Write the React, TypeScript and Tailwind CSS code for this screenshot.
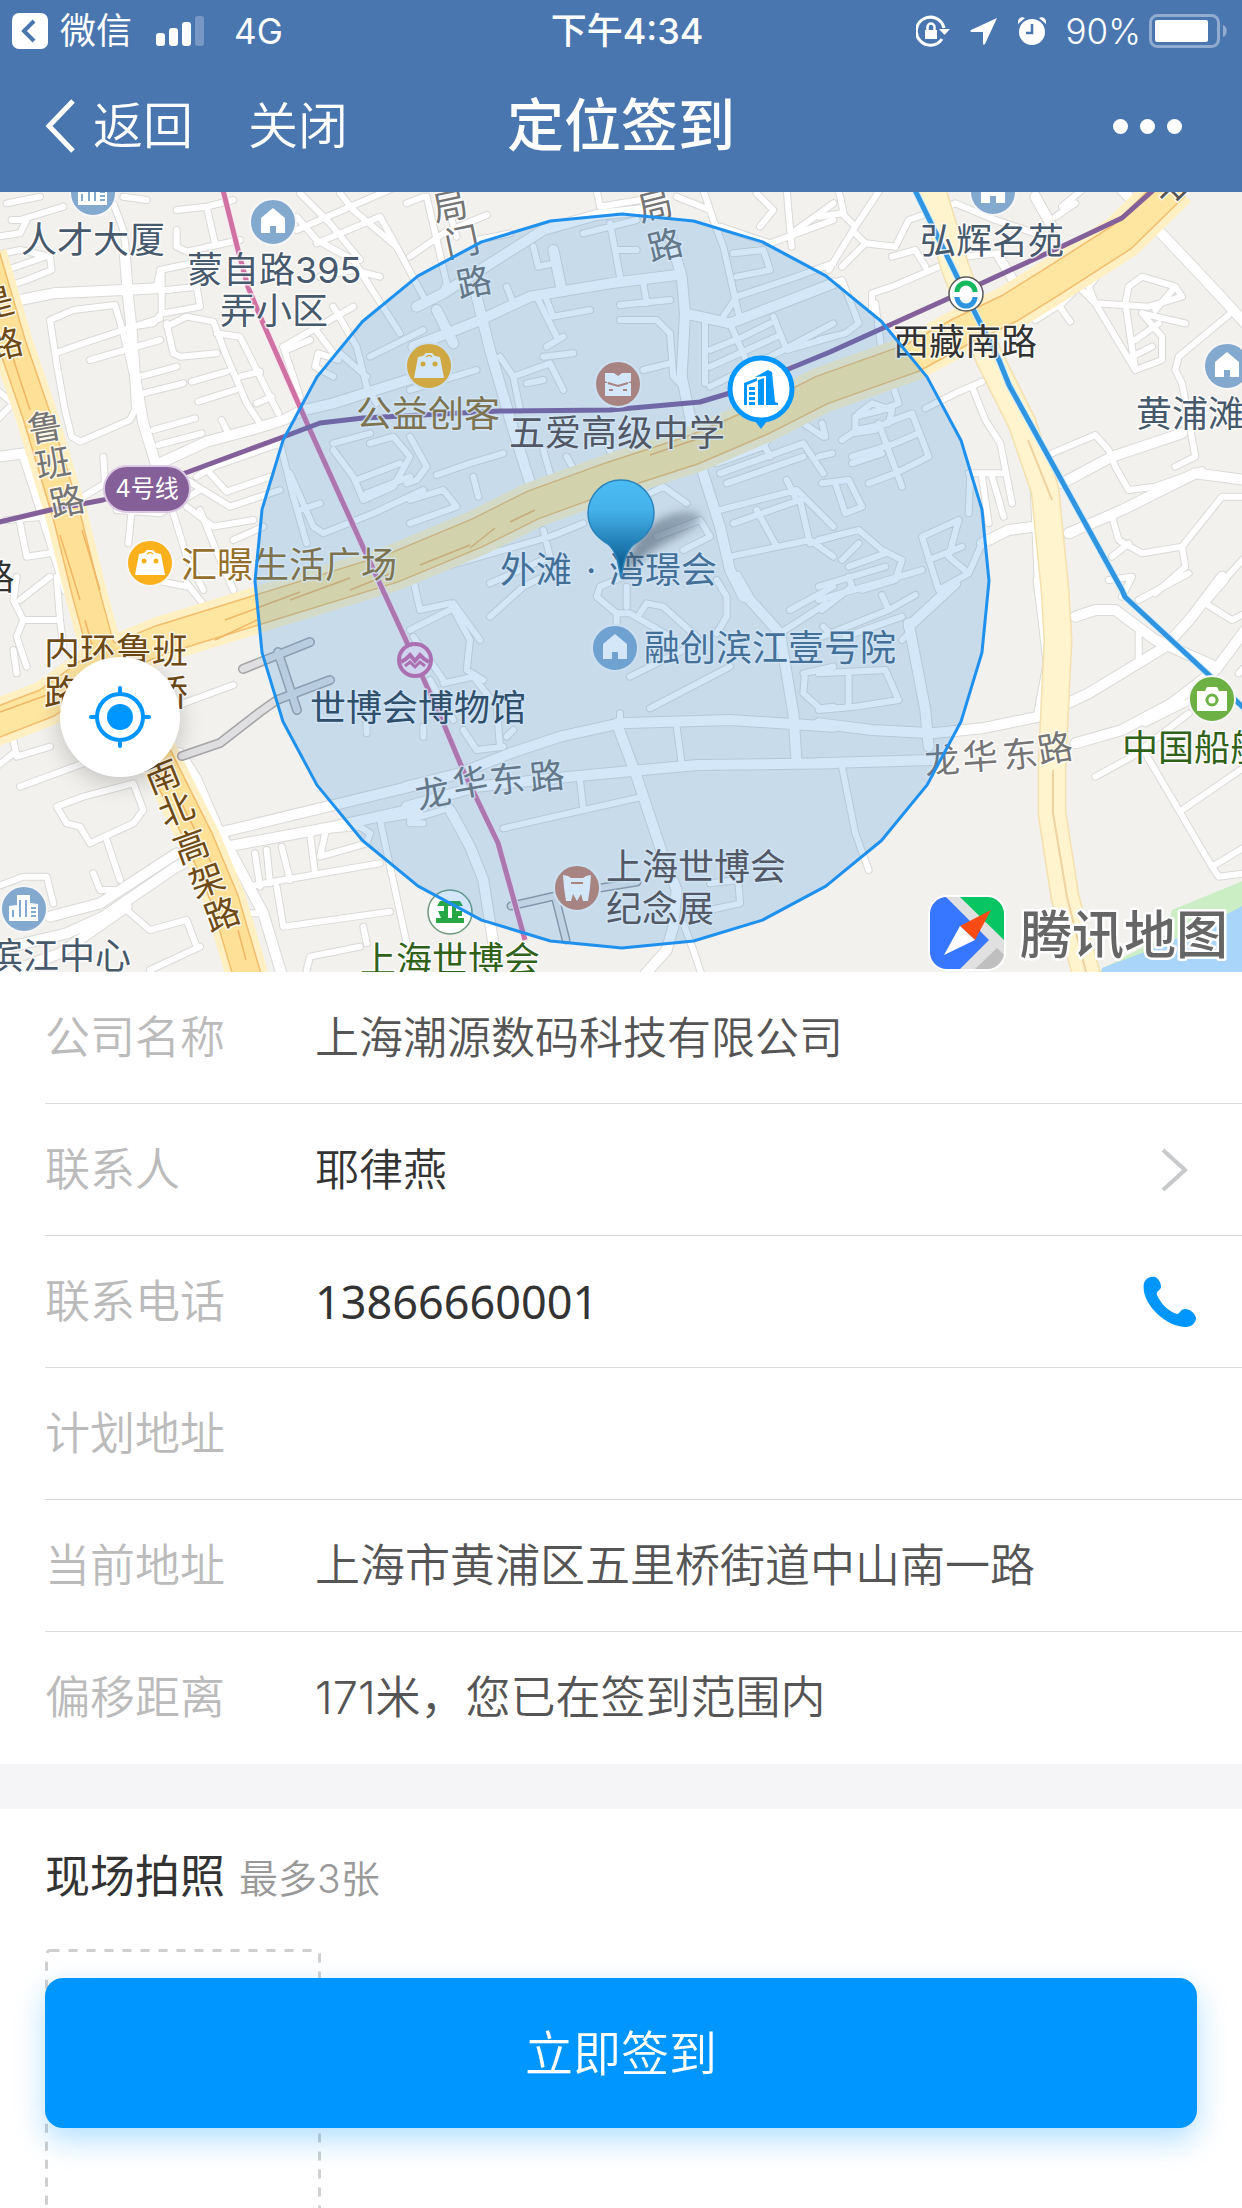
import React from 'react';

interface InfoRow {
  label: string;
  value?: string;
  tone?: string;
  action?: React.ReactNode;
}

interface Road {
  w: number;
  d: string;
}

interface TileData {
  x: number;
  y: number;
  roads: Road[];
}

interface LabelData {
  x: number;
  y: number;
  text: string;
  fill: string;
}

interface GlyphData extends LabelData {
  r: number;
}

const SLATE = '#47596c';
const BROWN = '#6e4a16';
const GREY = '#757575';
const OCHRE = '#94702c';
const UMBER = '#5f4d48';
const MOSS = '#2f6119';
const STEEL = '#4d6b87';

// road geometry is stored per tile, three units to a pixel
const tiles: TileData[] = [
  {
    x: 0,
    y: 190,
    roads: [
      {
        w: 30,
        d: 'M-10 350L60 330L160 310L370 300L470 295M375 200L385 330L395 420L405 560L430 700L470 830L500 900M490 815L620 755L770 715L850 690L905 662L1000 640L1270 555M0 800L70 790L100 880L200 1200',
      },
      {
        w: 18,
        d: 'M20 40L120 20M-10 140L60 130L80 90L35 90M60 90L190 50M10 190L60 180L150 200L155 240L80 270L-10 300M20 240L150 195M165 490L150 390L220 360L345 345L370 430L400 560L405 660L390 690L240 755L215 740L195 660L175 550ZM165 490L250 460L370 420L480 385M270 510L340 490L480 450M470 295L480 240L600 215M485 240L485 370L460 400L390 410M490 370L600 350L590 290M500 300L590 290',
      },
      {
        w: 18,
        d: 'M420 560L530 530M430 610L550 580M575 575L680 545M595 635L705 600M460 720L585 685M475 765L605 730M500 400L520 490L540 500L650 490M500 410L560 380L640 395L680 500L740 640L780 700M650 430L720 440L780 560L835 670M720 560L780 545M770 640L815 620M665 690L690 740M590 860L640 830L840 760M630 850L680 905L810 860M560 870L690 950L840 900M840 760L880 920L920 1060',
      },
      {
        w: 18,
        d: 'M530 60L620 50L700 30M620 50L645 160M530 120L530 170L560 185L720 150M370 20L440 30M340 40L370 120L380 200M890 80L950 150L1060 210L1110 290L1200 430M890 120L1190 -10M900 10L990 100L1080 210M950 160L1140 80L1190 170M1020 10L1060 60L1190 170M1190 170L1270 320M960 260L1060 240L1140 260M850 470L1060 350M940 410L1015 510L955 490L945 530L1000 560M1000 350L1070 470L1100 590L1130 640M1110 500L1270 420M1020 490L1100 560',
      },
      {
        w: 18,
        d: 'M1000 760L1110 730M1000 780L1060 860L1090 930L1180 890L1230 800L1180 740L1110 760M1070 870L1200 820M1100 910L1230 860M870 850L940 1010L970 1030L1120 970L1270 900M900 960L960 940M560 950L640 1010L760 990M600 960L640 1060L700 1200M700 1050L790 1010M520 970L560 1100L610 1200M395 960L385 1060M350 960L480 970L600 900M310 800L315 880L250 920M60 1000L80 1100L150 1090M20 990L130 980M-10 600L40 640L-10 690M850 470L900 620M860 480L930 450',
      },
    ],
  },
  {
    x: 410,
    y: 190,
    roads: [
      {
        w: 30,
        d: 'M10 470L200 395L360 320L600 280L800 255M780 140L815 260L825 370L815 560L870 820L930 1010L960 1140L1000 1220M825 370L960 400L1270 280M430 180L455 300M80 360L130 460M200 320L240 480L310 720L370 910M20 350L100 310L400 120L560 75L700 60',
      },
      {
        w: 18,
        d: 'M0 200L100 130L230 75M-10 40L40 20M50 20L110 280L90 320M110 40L140 140M200 150L300 130M370 170L385 230L430 220M290 290L310 340M600 100L630 260M520 130L680 90M620 180L680 180M560 0L570 50L690 30M800 20L900 60L880 0M900 60L910 90L940 170L990 390M930 110L1080 160L1270 90M970 190L1060 180L1080 240L980 260M940 380L980 320L1160 260L1270 220M1130 0L1145 170M1145 130L1270 40M1050 110L1090 60L1040 10',
      },
      {
        w: 18,
        d: 'M380 320L440 440M410 330L430 380L540 360M630 345L780 330M700 280L710 340M630 390L740 390L780 430L790 560L830 600M885 390L885 580M900 480L1000 440L1080 400M900 530L1100 440M900 590L1100 490M960 400L1030 560M1090 380L1130 480L1270 440M1100 490L1270 400M700 540L780 520M410 470L460 440M400 500L490 490M310 560L420 520L460 600M310 560L330 660M350 580L400 570M270 500L310 560M0 600L200 540',
      },
      {
        w: 18,
        d: 'M80 855L180 820L280 790M190 860L205 920M0 740L50 830L20 870L-10 880M0 930L100 900L140 950L0 1000M400 780L420 850M470 800L510 870M590 760L620 830M920 820L1060 770L1080 740M930 850L1180 760L1240 850M950 880L1180 800M1060 760L1080 800M1180 700L1240 740M700 920L760 890L830 940M930 960L1160 900L1270 1010M970 1000L1170 930L1200 1060L1270 1040M1040 960L1100 1070M1130 870L1160 930M960 1100L1200 1050L1270 1100M740 1040L870 990L900 1040L820 1080M400 1020L420 1100L240 1180M0 1160L420 1040L520 1000',
      },
    ],
  },
  {
    x: 822,
    y: 190,
    roads: [
      {
        w: 30,
        d: 'M980 90L1150 270L1270 400M480 1060L560 1020L640 1010M720 880L870 800L1080 730M740 1030L900 960L1120 850L1270 870M640 870L650 1100L655 1210M900 0L990 90M640 20L690 110',
      },
      {
        w: 18,
        d: 'M-10 80L60 70L100 110L20 240M50 0L65 70M100 110L180 -10M100 130L130 160L60 230M130 160L220 170L260 90L400 40L520 90L640 130M210 200L280 180L310 230M150 360L150 310L210 290L420 200L530 190L590 290M160 340L180 490M0 290L60 270L110 400L70 430L-10 450M720 50L780 0M700 80L760 40M520 190L580 290M840 240L800 290L820 340L980 350L1080 320L1060 290L960 260L920 290L910 340L940 540L1020 510L1020 440L960 370M820 340L940 540M960 370L1090 400M1000 360L1060 290M940 450L1010 400M930 500L990 470',
      },
      {
        w: 18,
        d: 'M640 390L720 340L770 290L820 340M710 345L745 395M310 655L400 610L480 575M450 590L490 690L535 760L570 940M440 850L540 850M440 970L445 850M480 860L500 1000M510 860L545 980M1220 375L1070 500L1060 540L1080 580L1120 800L1060 830M690 790L820 735L860 780L880 830L920 900L1000 890L1140 840M820 1000L870 980L890 1050L960 1090L1080 1070L1200 920L1270 920M870 1100L920 1060M1080 1070L1090 1130L1000 1210M1180 1200L1270 1100M860 1170L930 1160L900 1220',
      },
      {
        w: 18,
        d: 'M210 580L230 640L180 660L100 680L100 720L200 700L210 660L150 640L110 670M60 750L90 730L160 720M170 700L240 890M190 700L270 670L320 800L220 850L140 880M90 800L220 760L290 730M90 820L180 790M0 700L10 740M-10 800L30 790M0 880L80 870L120 950L70 970L40 880M-10 1050L110 1020L180 1080L240 1110L220 1170L120 1200M60 1110L110 1060M80 1130L190 1090M-10 1190L190 1130M300 1040L410 990L380 1100L440 1150L350 1200L300 1040M320 1110L420 1070M480 1060L440 1150',
      },
    ],
  },
  {
    x: 0,
    y: 580,
    roads: [
      {
        w: 30,
        d: 'M540 520L590 600L650 740L700 830L790 1000L850 1200M650 760L1270 610M680 800L1000 740L1270 680M150 1010L300 970L530 820M-10 1110L200 1060L310 1010L530 860L650 800M-10 1190L180 1120L380 980',
      },
      {
        w: 18,
        d: 'M50 -10L40 60L70 120L180 120L190 200M70 120L50 170L80 260M60 60L150 -10M170 -10L180 120M40 210L50 280M40 480L50 530L150 500M-10 560L40 520M60 620L250 550M250 650L400 610L430 690L400 730L270 790L240 740L200 730L170 680L250 650M320 780L360 900M280 880L300 930L350 930M380 990L450 1050L560 1020L590 1100M-10 920L70 890L140 890L160 970M450 1170L600 1100M560 10L600 60L640 110M640 110L780 60M550 370L700 315M410 -10L560 20',
      },
      {
        w: 18,
        d: 'M740 920L850 900L1140 850M765 820L780 920M800 810L810 910M845 800L870 900M930 760L945 880M980 740L960 830L1100 790L1110 760L1080 740L980 750M830 920L850 1040L1170 995M1090 1040L1100 1090M750 1000L790 1000M920 1170L930 1130L1080 1100M1140 720L1220 1090M1140 720L1260 700M1100 410L1100 460',
      },
    ],
  },
  {
    x: 410,
    y: 580,
    roads: [
      {
        w: 30,
        d: 'M-10 620L150 580L300 520L450 470L630 430L960 420L1270 440M-10 680L200 620L480 590L860 555L1270 550M620 430L680 590L760 830L800 930L790 1040L770 1110L690 1200M980 -10L1020 60L1110 160L1150 400L1160 550M120 690L180 800L220 900L250 1090',
      },
      {
        w: 18,
        d: 'M10 0L30 90L120 70L180 180L170 270L220 300M0 150L120 90M130 70L210 180M240 110L340 20L400 -10M570 20L560 50L620 100L620 130M570 20L640 -10M650 20L650 80M620 100L660 100L780 170M690 100L710 70L760 80L860 170M920 0L950 50L950 110L920 160M660 290L820 210M720 385L960 260M630 400L630 430M800 440L815 550M510 600L520 690M280 745L520 690L700 650M10 170L100 300M100 310L190 290L260 380L270 500M160 450L200 510L280 500M130 420L60 300M40 440L40 470M290 470L310 450M1110 160L1250 70M1140 90L1270 20M1240 140L1270 170M1180 280L1270 260M1185 280L1180 340L1230 385L1270 380',
      },
      {
        w: 18,
        d: 'M820 1030L850 1110L880 1200M900 990L990 970L985 900L900 910M0 720L100 690M0 730L40 730',
      },
    ],
  },
  {
    x: 822,
    y: 580,
    roads: [
      {
        w: 30,
        d: 'M-10 430L150 450L330 460L480 445L650 410L800 340L1030 200L1110 110L1200 -10M330 540L-10 550M760 490L900 450L1050 370L1180 270L1270 150M650 0L680 250L650 410M760 110L820 90L880 90L1000 180L1180 260M260 130L310 390L320 500M260 140L400 10',
      },
      {
        w: 18,
        d: 'M950 60L1100 -20M950 160L950 250M1150 70L1230 120L1270 100M1150 70L1210 0M820 590L930 530L1100 400M970 430L1110 360M970 520L1170 860L1190 890L1270 880M1080 690L1270 560M1170 860L1270 800M0 170L200 90L280 45M180 45L200 90M0 90L90 20L80 -10M-10 60L300 -30M70 170L240 110M60 560L100 760L140 870M80 290L80 380M-10 280L190 270L230 360L100 380L-10 390M240 180L270 150M1250 280L1270 260',
      },
    ],
  },
];

const RING_ROAD =
  'M-10 725L47 703L100 665L160 640L257 610L393 568L477 533L533 505L610 477L693 450L763 420L822 390L912 358L960 332L1010 308L1055 280L1122 237L1175 185';
const LUBAN_ROAD = 'M-14 255L13 347L37 417L67 517L85 590L100 645L150 740L200 840L225 900L250 985';
const XIZANG_ROAD =
  'M929 180L955 267L989 357L1022 423L1045 490L1055 590L1058 640L1052 767L1052 813L1065 897L1088 980';
const LINE_4 =
  'M-5 523L50 510L103 500L188 472L283 437L320 423L363 418L500 411L610 410L700 402L730 393L830 352L965 291L1065 245L1122 218L1158 186';
const LINE_13 =
  'M222 186L238 250L248 287L263 323L310 430L363 547L415 660L445 727L463 770L498 843L525 940';
const LINE_8 = 'M913 186L965 293L999 360L1009 385L1122 590L1125 597L1209 675L1250 714';
const PIERS = 'M182 756L220 743L260 712L277 700L330 680M243 669L310 642M278 652L297 710';

const labels: LabelData[] = [
  { x: 21, y: 253, text: '人才大厦', fill: SLATE },
  { x: 187, y: 283, text: '蒙自路395', fill: SLATE },
  { x: 220, y: 324, text: '弄小区', fill: SLATE },
  { x: 356, y: 427, text: '公益创客', fill: OCHRE },
  { x: 509, y: 446, text: '五爱高级中学', fill: UMBER },
  { x: 920, y: 254, text: '弘辉名苑', fill: SLATE },
  { x: 893, y: 355, text: '西藏南路', fill: '#333333' },
  { x: 1136, y: 427, text: '黄浦滩', fill: SLATE },
  { x: 181, y: 578, text: '汇暻生活广场', fill: OCHRE },
  { x: 500, y: 583, text: '外滩', fill: STEEL },
  { x: 586, y: 583, text: '·', fill: STEEL },
  { x: 609, y: 583, text: '湾璟会', fill: STEEL },
  { x: 644, y: 661, text: '融创滨江壹号院', fill: STEEL },
  { x: 310, y: 721, text: '世博会博物馆', fill: '#33414f' },
  { x: 44, y: 664, text: '内环鲁班', fill: BROWN },
  { x: 44, y: 706, text: '路立交桥', fill: BROWN },
  { x: -13, y: 969, text: '滨江中心', fill: SLATE },
  { x: 360, y: 973, text: '上海世博会', fill: MOSS },
  { x: 606, y: 880, text: '上海世博会', fill: UMBER },
  { x: 606, y: 922, text: '纪念展', fill: UMBER },
  { x: 1122, y: 761, text: '中国船舶馆', fill: MOSS },
];

const glyphs: GlyphData[] = [
  { x: 450, y: 206, r: -12, text: '局', fill: GREY },
  { x: 462, y: 242, r: -12, text: '门', fill: GREY },
  { x: 474, y: 282, r: -12, text: '路', fill: GREY },
  { x: 655, y: 206, r: -14, text: '局', fill: GREY },
  { x: 665, y: 245, r: -14, text: '路', fill: GREY },
  { x: -4, y: 303, r: -14, text: '是', fill: BROWN },
  { x: 5, y: 344, r: -14, text: '路', fill: BROWN },
  { x: 45, y: 427, r: -10, text: '鲁', fill: GREY },
  { x: 53, y: 463, r: -10, text: '班', fill: GREY },
  { x: 67, y: 501, r: -12, text: '路', fill: GREY },
  { x: -3, y: 577, r: 0, text: '路', fill: '#333333' },
  { x: 433, y: 793, r: -12, text: '龙', fill: GREY },
  { x: 470, y: 782, r: -10, text: '华', fill: GREY },
  { x: 507, y: 779, r: -6, text: '东', fill: GREY },
  { x: 547, y: 776, r: -6, text: '路', fill: GREY },
  { x: 942, y: 760, r: -4, text: '龙', fill: GREY },
  { x: 980, y: 756, r: -4, text: '华', fill: GREY },
  { x: 1020, y: 754, r: -6, text: '东', fill: GREY },
  { x: 1055, y: 748, r: -10, text: '路', fill: GREY },
  { x: 162, y: 776, r: -22, text: '南', fill: BROWN },
  { x: 176, y: 809, r: -22, text: '北', fill: BROWN },
  { x: 191, y: 846, r: -20, text: '高', fill: BROWN },
  { x: 207, y: 880, r: -20, text: '架', fill: BROWN },
  { x: 222, y: 914, r: -20, text: '路', fill: BROWN },
  { x: 1172, y: 187, r: 45, text: '中', fill: '#555555' },
];

const CENTER = { x: 622, y: 581 };
const RADIUS = 367;

const rangePoints = Array.from({ length: 32 }, (_, i) => {
  const a = (i / 32) * Math.PI * 2;
  return `${CENTER.x + RADIUS * Math.sin(a)},${CENTER.y - RADIUS * Math.cos(a)}`;
}).join(' ');

function Roads({ casing }: { casing?: boolean }) {
  return (
    <g fill="none" stroke={casing ? '#dad9d7' : '#ffffff'} strokeLinecap="round" strokeLinejoin="round">
      {tiles.map((tile) => (
        <g key={`${tile.x}-${tile.y}`} transform={`translate(${tile.x} ${tile.y}) scale(0.33333)`}>
          {tile.roads.map((road) => (
            <path key={road.d} d={road.d} strokeWidth={casing ? road.w + 6 : road.w} />
          ))}
        </g>
      ))}
    </g>
  );
}

function Poi({ x, y, fill, children }: { x: number; y: number; fill: string; children: React.ReactNode }) {
  return (
    <g transform={`translate(${x} ${y})`}>
      <circle r="23" fill={fill} stroke="#f6f6f6" strokeWidth="2" />
      {children}
    </g>
  );
}

const home = <path d="M0-14L12-4V11H3V4H-3V11H-12V-4Z" fill="#fff" />;

const office = (
  <g>
    <path d="M-15 12V-3L-7-4V-14H6V-6L14-5V12Z" fill="#fff" />
    <path d="M-11 1V8M-4-9V8M2-9V8M7-1H12M7 3H12M7 7H12" stroke="#83a9cf" strokeWidth="2" />
  </g>
);

const bag = (
  <g>
    <path d="M-11-9L-6-10L-3-13H3L6-10L11-9L15 12H-15Z" fill="#fff" />
    <path d="M-3-9Q0-12 3-9" fill="none" stroke="#fbb11c" strokeWidth="1.5" />
    <circle cx="-6" cy="-2" r="2.5" fill="#fbb11c" />
    <circle cx="6" cy="-2" r="2.5" fill="#fbb11c" />
  </g>
);

function MapCanvas() {
  return (
    <svg
      className="block h-full w-full"
      viewBox="0 192 1242 780"
      preserveAspectRatio="xMidYMid slice"
      role="img"
      aria-label="签到位置地图"
    >
      <defs>
        <linearGradient id="pin" x1="0" y1="0" x2="0" y2="1">
          <stop offset="0" stopColor="#4cbcf4" />
          <stop offset="0.3" stopColor="#45b2ea" />
          <stop offset="0.6" stopColor="#2786bd" />
          <stop offset="0.8" stopColor="#13689c" />
          <stop offset="1" stopColor="#0f6296" />
        </linearGradient>
        <linearGradient id="pinShadow" x1="0" y1="0" x2="1" y2="0">
          <stop offset="0" stopColor="#3c5064" stopOpacity="0.6" />
          <stop offset="1" stopColor="#3c5064" stopOpacity="0.35" />
        </linearGradient>
        <filter id="soft" x="-30%" y="-30%" width="160%" height="160%">
          <feGaussianBlur stdDeviation="4" />
        </filter>
        <clipPath id="logo">
          <rect x="930" y="897" width="74" height="72" rx="17" />
        </clipPath>
      </defs>

      <rect y="192" width="1242" height="780" fill="#f2f1ee" />
      <path d="M1250 878L1172 910L1166 935L1090 975H1250Z" fill="#cbeec4" />
      <path d="M1250 902L1200 928L1150 950L1102 968V975H1250Z" fill="#a8d5f9" />

      <Roads casing />
      <Roads />

      <g fill="none" strokeLinejoin="round">
        <path d={XIZANG_ROAD} stroke="#f5dfae" strokeWidth="29" />
        <path d={XIZANG_ROAD} stroke="#fff4cd" strokeWidth="26" />
        <path d="M1028 440L1052 500M1053 770V813L1067 897L1088 980" stroke="#efd2a0" strokeWidth="2" />
        <path d={RING_ROAD} stroke="#fff0c4" strokeWidth="46" />
        <path d={LUBAN_ROAD} stroke="#fff0c4" strokeWidth="42" />
        <path d={RING_ROAD} stroke="#f2bd6c" strokeWidth="31" />
        <path d={LUBAN_ROAD} stroke="#f2bd6c" strokeWidth="29" />
        <path d={RING_ROAD} stroke="#fee5a0" strokeWidth="28" />
        <path d={LUBAN_ROAD} stroke="#fee096" strokeWidth="26" />
        <path
          d="M12 355L30 410M60 535L80 600M82 530L100 590M85 620L92 645M0 712L50 694M215 640L257 620M225 620L300 592M290 600L350 578M350 590L395 572M420 565L470 545M470 548L495 528M510 522L535 510M650 455L700 438M180 800L215 870M238 930L246 960"
          stroke="#f0b565"
          strokeWidth="1.5"
        />
        <g strokeLinecap="round">
          <path d={PIERS} stroke="#a5a5a8" strokeWidth="10" />
          <path d={PIERS} stroke="#dfdfe1" strokeWidth="7" />
          <path d="M511 906L555 896L566 940M600 888L637 882" stroke="#9c9ca0" strokeWidth="9" />
          <path d="M511 906L555 896L566 940M600 888L637 882" stroke="#e6e6e6" strokeWidth="6" />
        </g>
        <path d={LINE_13} stroke="#fbe6f1" strokeWidth="7" />
        <path d={LINE_13} stroke="#cf72a3" strokeWidth="5" />
        <path d={LINE_4} stroke="#84609a" strokeWidth="5" />
        <path d={LINE_8} stroke="#cfeafd" strokeWidth="7" />
        <path d={LINE_8} stroke="#2f95e0" strokeWidth="5" />
      </g>

      <Poi x={93} y={193} fill="#83a9cf">{office}</Poi>
      <Poi x={24} y={909} fill="#83a9cf">{office}</Poi>
      <Poi x={273} y={222} fill="#83a9cf">{home}</Poi>
      <Poi x={993} y={192} fill="#83a9cf">{home}</Poi>
      <Poi x={1227} y={366} fill="#83a9cf">{home}</Poi>
      <Poi x={615} y={648} fill="#83a9cf">{home}</Poi>
      <Poi x={150} y={563} fill="#fbb11c">{bag}</Poi>
      <Poi x={429} y={366} fill="#fbb11c">{bag}</Poi>
      <Poi x={618} y={384} fill="#c8846c">
        <path d="M-13-11H-4L0-8L4-11H13V-3L10-1H13V12H-13V-1H-10L-13-3Z" fill="#fff" />
        <path d="M-10-1L0 2L10-1M-9 6H-5M9 6H5" stroke="#c8846c" strokeWidth="2" fill="none" />
      </Poi>
      <Poi x={577} y={888} fill="#c8846c">
        <path d="M-14-13L-9-12L-6-10H6L9-12L14-13L13 0L11 13H6L4 6L0 13L-4 6L-6 13H-11L-13 0Z" fill="#fff" />
        <path d="M-6-5H6" stroke="#c8846c" strokeWidth="2" />
      </Poi>
      <Poi x={1212} y={699} fill="#6db043">
        <path d="M-15-8H-7L-5-12H5L7-8H15V12H-15Z" fill="#fff" />
        <circle cy="1" r="5" fill="none" stroke="#6db043" strokeWidth="3" />
      </Poi>
      <g transform="translate(450 912)">
        <circle r="22" fill="#fff" stroke="#6f9a7c" strokeWidth="1.5" />
        <path d="M-10-11H10L13-6H6V-1H12V4H8V6H14V11H-14V6H-9L-12-1H-6V-6H-13ZM-2-6V6H2V-6Z" fill="#27a844" fillRule="evenodd" />
      </g>
      <g transform="translate(415 660)" fill="none" stroke="#cf6aa8">
        <circle r="16" fill="#fbe9f3" strokeWidth="4" />
        <path d="M-14 2L-9-1L-5-5L0 1L5-5L9-1L14 2" strokeWidth="4" />
        <path d="M-10 6L-5 2L0 7L5 2L10 6" strokeWidth="3" />
      </g>
      <g transform="translate(966 294)">
        <circle r="17" fill="#fff" stroke="#5b5b5b" strokeWidth="1.5" />
        <path d="M-9-2A9 9 0 0 1 9-2" fill="none" stroke="#15b85c" strokeWidth="5" />
        <path d="M-9 3A9 9 0 0 0 9 3" fill="none" stroke="#2f95e0" strokeWidth="5" />
      </g>
      <rect x="104" y="466" width="86" height="46" rx="23" fill="#855f98" stroke="#dcc9e4" strokeWidth="2" />
      <text x="147" y="497" fontSize="24" fill="#fff" textAnchor="middle">
        4号线
      </text>

      <g
        fontSize="36"
        fontFamily="Inter, 'Noto Sans CJK SC', sans-serif"
        stroke="#ffffff"
        strokeOpacity="0.8"
        strokeWidth="3"
        strokeLinejoin="round"
        paintOrder="stroke"
      >
        {labels.map(({ x, y, text, fill }) => (
          <text key={`${x}-${y}`} x={x} y={y} fill={fill}>
            {text}
          </text>
        ))}
        {glyphs.map(({ x, y, r, text, fill }) => (
          <text
            key={`${x}-${y}`}
            transform={`translate(${x} ${y}) rotate(${r})`}
            y="13"
            fontSize="35"
            textAnchor="middle"
            fill={fill}
          >
            {text}
          </text>
        ))}
      </g>

      <polygon
        points={rangePoints}
        fill="#2588da"
        fillOpacity="0.2"
        stroke="#1e90ee"
        strokeWidth="3"
        strokeLinejoin="round"
      />

      {/* planned place */}
      <path d="M752 417H770L761 429Z" fill="#0096ff" />
      <circle cx="761" cy="389" r="31" fill="#fff" stroke="#0096ff" strokeWidth="5" />
      <g fill="#0096ff">
        <path d="M744 383L757 378V381L747 385V405H744Z" />
        <path d="M749 387H755V390H749ZM749 392H755V395H749ZM749 397H755V400H749ZM749 402H755V405H749Z" />
        <path d="M758 380L764 378V405H758Z" />
        <path d="M755 377L768 370L772 372L775 402L778 403V405H766V376Z" />
      </g>

      {/* current position */}
      <path d="M622 577C628 555 638 530 662 518C690 506 708 512 698 524C684 538 650 545 622 577Z" fill="url(#pinShadow)" filter="url(#soft)" />
      <path
        d="M621 578C618 561 616 551 608 544C596 537 588 527 588 513A33 33 0 0 1 654 513C654 527 646 537 634 544C626 551 624 561 621 578Z"
        fill="url(#pin)"
        stroke="#2a83bb"
        strokeWidth="1.5"
      />

      {/* map provider */}
      <rect x="928" y="895" width="78" height="76" rx="19" fill="#fff" />
      <g clipPath="url(#logo)">
        <rect x="930" y="897" width="74" height="72" fill="#e0e0e0" />
        <path d="M930 897H946L989 940L960 969H930Z" fill="#3777ff" />
        <path d="M960 897H1004V940Z" fill="#07c562" />
        <path d="M975 969L997 948L1010 960V969Z" fill="#bfbfbf" />
        <path d="M991 910L960 926L975 940Z" fill="#fa4b14" />
        <path d="M944 955L960 926L975 940Z" fill="#fff" />
      </g>
      <text
        x="1020"
        y="954"
        fontSize="52"
        fontWeight="500"
        fontFamily="'Noto Sans CJK SC', sans-serif"
        fill="#666"
        stroke="#fff"
        strokeWidth="5"
        strokeLinejoin="round"
        paintOrder="stroke"
      >
        腾讯地图
      </text>
    </svg>
  );
}

function StatusBar() {
  return (
    <div className="grid h-[62px] grid-cols-[1fr_auto_1fr] items-center pl-3 text-[36px] leading-[44px]">
      <div className="flex items-center">
        <svg className="h-9 w-9" viewBox="0 0 36 36">
          <rect width="36" height="36" rx="7" fill="#fff" />
          <path d="M22 8L12 18L22 28" fill="none" stroke="#4a76b0" strokeWidth="4" />
        </svg>
        <span className="ml-3">微信</span>
        <svg className="ml-6 h-[30px] w-12" viewBox="0 0 48 30" fill="#fff">
          <rect y="17" width="9" height="13" rx="3" />
          <rect x="13" y="12" width="9" height="18" rx="3" />
          <rect x="26" y="6" width="9" height="24" rx="3" />
          <rect x="39" width="9" height="30" rx="3" opacity="0.25" />
        </svg>
        <span className="ml-[30px] text-[35px]">4G</span>
      </div>
      <time className="font-medium">下午4:34</time>
      <div className="flex items-center justify-end pr-[14px]">
        <svg className="h-[32px] w-[34px]" viewBox="0 0 34 32">
          <path d="M26 24A14 14 0 1 1 28 13" fill="none" stroke="#fff" strokeWidth="3" />
          <path d="M23 14H34L28.500 20Z" fill="#fff" />
          <path d="M9 15H21V24H9Z" fill="#fff" />
          <path d="M11.500 16V12A3.500 3.500 0 0 1 18.500 12V16" fill="none" stroke="#fff" strokeWidth="2.500" />
        </svg>
        <svg className="ml-5 h-7 w-7" viewBox="0 0 28 28" fill="#fff">
          <path d="M27 1L15 27C14 28 13 28 13 26V15H2C0 15 0 13.500 1 13Z" />
        </svg>
        <svg className="ml-5 h-[30px] w-7" viewBox="0 0 28 30">
          <circle cx="14" cy="16" r="13" fill="#fff" />
          <path d="M0 8C-1 3 3 0 7 2ZM28 8C29 3 25 0 21 2Z" fill="#fff" />
          <path d="M14 8V17H8" fill="none" stroke="#4a76b0" strokeWidth="2.500" />
        </svg>
        <span className="ml-5 text-[35px] font-[350]">90%</span>
        <svg className="ml-2 h-[34px] w-[79px]" viewBox="0 0 79 34">
          <rect x="1.500" y="1.500" width="68" height="31" rx="7" fill="none" stroke="#fff" strokeOpacity="0.4" strokeWidth="3" />
          <rect x="6" y="6" width="53" height="22" rx="2" fill="#fff" />
          <path d="M74 11C79 13 79 21 74 23Z" fill="#fff" fillOpacity="0.4" />
        </svg>
      </div>
    </div>
  );
}

function NavBar() {
  return (
    <nav className="grid h-[130px] grid-cols-[1fr_auto_1fr] items-center px-[45px] pb-[2px] text-[50px] leading-[60px]">
      <div className="flex items-center gap-[55px] font-[350]">
        <button type="button" className="flex items-center gap-[18px]">
          <svg className="h-[54px] w-[30px]" viewBox="0 0 30 54">
            <path d="M28 2L4 27L28 52" fill="none" stroke="#fff" strokeWidth="5" />
          </svg>
          返回
        </button>
        <button type="button">关闭</button>
      </div>
      <h1 className="text-[57px] leading-[72px] font-medium">定位签到</h1>
      <button type="button" aria-label="更多" className="flex justify-self-end gap-3 pr-[15px]">
        <i className="h-[15px] w-[15px] rounded-full bg-white" />
        <i className="h-[15px] w-[15px] rounded-full bg-white" />
        <i className="h-[15px] w-[15px] rounded-full bg-white" />
      </button>
    </nav>
  );
}

const rows: InfoRow[] = [
  { label: '公司名称', value: '上海潮源数码科技有限公司', tone: 'text-[44px] text-[#555]' },
  {
    label: '联系人',
    value: '耶律燕',
    tone: 'text-[44px] text-[#333]',
    action: (
      <button type="button" aria-label="选择联系人" className="pr-2">
        <svg className="block h-11 w-7" viewBox="0 0 28 44">
          <path d="M2 2L24 22L2 42" fill="none" stroke="#c8c9ca" strokeWidth="4" />
        </svg>
      </button>
    ),
  },
  {
    label: '联系电话',
    value: '13866660001',
    tone: "font-['Noto_Sans'] text-[45px] font-normal text-[#333]",
    action: (
      <a href="tel:13866660001" aria-label="拨打电话">
        <svg className="block h-[52px] w-[54px]" viewBox="0 0 54 52">
          <path
            d="M1 7C3 2 7 0 12 1C16 3 18 7 18 11C17 15 13 15 14 19C18 28 25 35 34 38C37 38 37 33 42 33C47 33 52 37 53 42C53 47 48 51 43 51C22 51-3 26 1 7Z"
            fill="#0096ff"
          />
        </svg>
      </a>
    ),
  },
  { label: '计划地址' },
  { label: '当前地址', value: '上海市黄浦区五里桥街道中山南一路', tone: 'text-[45px] text-[#555]' },
  { label: '偏移距离', value: '171米，您已在签到范围内', tone: 'text-[45px] text-[#555]' },
];

function InfoList() {
  return (
    <dl className="bg-white pl-[45px] font-[350]">
      {rows.map(({ label, value, tone, action }) => (
        <div key={label} className="flex h-[132px] items-center border-b border-[#d9d9d9] pr-[45px] last:border-b-0">
          <dt className="w-[270px] shrink-0 text-[45px] leading-[60px] text-[#bbb]">{label}</dt>
          <dd className={`flex-1 leading-[60px] ${tone || ''}`}>{value}</dd>
          {action && <dd className="flex shrink-0 items-center">{action}</dd>}
        </div>
      ))}
    </dl>
  );
}

export default function App() {
  return (
    <div className="flex h-screen flex-col overflow-hidden bg-white font-['Inter','Noto_Sans_CJK_SC',sans-serif]">
      <header className="shrink-0 bg-[#4a76b0] text-white">
        <StatusBar />
        <NavBar />
      </header>

      <main className="min-h-0 flex-1 overflow-y-auto bg-[#f5f5f8] [scrollbar-width:none]">
        <section className="relative h-[780px] overflow-hidden">
          <MapCanvas />
          <button
            type="button"
            aria-label="重新定位"
            className="absolute bottom-[195px] left-[60px] flex h-[120px] w-[120px] items-center justify-center rounded-full bg-white shadow-[0_6px_24px_rgba(0,0,0,0.2)]"
          >
            <svg className="h-16 w-16" viewBox="-32 -32 64 64" stroke="#0096ff" strokeWidth="4" strokeLinecap="round">
              <circle r="23" fill="none" />
              <circle r="13" fill="#0096ff" stroke="none" />
              <path d="M0-29V-23M0 29V23M-29 0H-23M29 0H23" />
            </svg>
          </button>
        </section>

        <InfoList />

        <section className="mt-[45px] bg-white px-[45px] pt-[38px] pb-[260px]">
          <h2 className="flex items-baseline gap-[14px] text-[45px] leading-[60px] text-[#333]">
            现场拍照
            <small className="text-[39px] font-[350] text-[#999]">最多3张</small>
          </h2>
          <button type="button" aria-label="添加照片" className="mt-10 block">
            <svg className="block h-[276px] w-[276px]" viewBox="0 0 276 276">
              <rect
                x="1.500"
                y="1.500"
                width="273"
                height="273"
                rx="4"
                fill="none"
                stroke="#d0d0d0"
                strokeWidth="3"
                strokeDasharray="9 9"
              />
            </svg>
          </button>
        </section>
      </main>

      <footer className="fixed inset-x-0 bottom-20 px-[45px]">
        <button
          type="button"
          className="h-[150px] w-full rounded-[18px] bg-[#0096ff] pt-[2px] text-[48px] leading-[60px] font-[350] text-white shadow-[0_12px_30px_rgba(0,150,255,0.3)]"
        >
          立即签到
        </button>
      </footer>
    </div>
  );
}
